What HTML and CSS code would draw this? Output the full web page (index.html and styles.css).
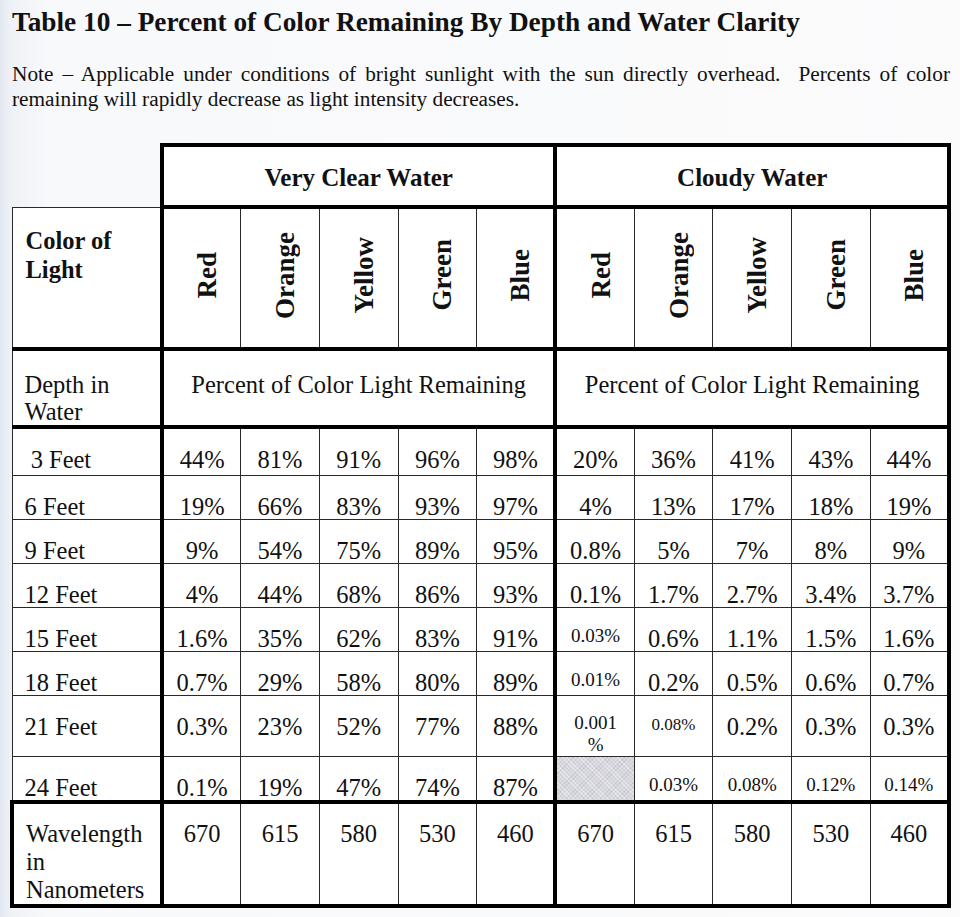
FILE: index.html
```html
<!DOCTYPE html>
<html lang="en">
<head>
<meta charset="utf-8">
<title>Table 10 – Percent of Color Remaining By Depth and Water Clarity</title>
<link rel="stylesheet" href="styles.css">
</head>
<body>
<main class="page">
  <h1 class="title">Table 10 – Percent of Color Remaining By Depth and Water Clarity</h1>
  <p class="note">Note – Applicable under conditions of bright sunlight with the sun directly overhead.&nbsp; Percents of color remaining will rapidly decrease as light intensity decreases.</p>
  <table class="chart">
    <colgroup>
      <col class="c-label">
      <col class="c-val"><col class="c-val"><col class="c-val"><col class="c-val"><col class="c-val">
      <col class="c-val"><col class="c-val"><col class="c-val"><col class="c-val"><col class="c-val">
    </colgroup>
    <tr class="r-group">
      <td class="corner"></td>
      <th colspan="5" class="group">Very Clear Water</th>
      <th colspan="5" class="group">Cloudy Water</th>
    </tr>
    <tr class="r-colors">
      <th class="lbl-color">Color of<br>Light</th>
      <th class="rot g1"><span>Red</span></th>
      <th class="rot"><span>Orange</span></th>
      <th class="rot"><span>Yellow</span></th>
      <th class="rot"><span>Green</span></th>
      <th class="rot"><span>Blue</span></th>
      <th class="rot g1"><span>Red</span></th>
      <th class="rot"><span>Orange</span></th>
      <th class="rot"><span>Yellow</span></th>
      <th class="rot"><span>Green</span></th>
      <th class="rot last"><span>Blue</span></th>
    </tr>
    <tr class="r-depth">
      <td class="lbl">Depth in<br>Water</td>
      <td colspan="5" class="pct g1">Percent of Color Light Remaining</td>
      <td colspan="5" class="pct g1 last">Percent of Color Light Remaining</td>
    </tr>
    <tr class="r-data r-first">
      <td class="lbl">&nbsp;3 Feet</td>
      <td class="g1">44%</td><td>81%</td><td>91%</td><td>96%</td><td>98%</td>
      <td class="g1">20%</td><td>36%</td><td>41%</td><td>43%</td><td class="last">44%</td>
    </tr>
    <tr class="r-data">
      <td class="lbl">6 Feet</td>
      <td class="g1">19%</td><td>66%</td><td>83%</td><td>93%</td><td>97%</td>
      <td class="g1">4%</td><td>13%</td><td>17%</td><td>18%</td><td class="last">19%</td>
    </tr>
    <tr class="r-data">
      <td class="lbl">9 Feet</td>
      <td class="g1">9%</td><td>54%</td><td>75%</td><td>89%</td><td>95%</td>
      <td class="g1">0.8%</td><td>5%</td><td>7%</td><td>8%</td><td class="last">9%</td>
    </tr>
    <tr class="r-data">
      <td class="lbl">12 Feet</td>
      <td class="g1">4%</td><td>44%</td><td>68%</td><td>86%</td><td>93%</td>
      <td class="g1">0.1%</td><td>1.7%</td><td>2.7%</td><td>3.4%</td><td class="last">3.7%</td>
    </tr>
    <tr class="r-data">
      <td class="lbl">15 Feet</td>
      <td class="g1">1.6%</td><td>35%</td><td>62%</td><td>83%</td><td>91%</td>
      <td class="g1 small">0.03%</td><td>0.6%</td><td>1.1%</td><td>1.5%</td><td class="last">1.6%</td>
    </tr>
    <tr class="r-data">
      <td class="lbl">18 Feet</td>
      <td class="g1">0.7%</td><td>29%</td><td>58%</td><td>80%</td><td>89%</td>
      <td class="g1 small">0.01%</td><td>0.2%</td><td>0.5%</td><td>0.6%</td><td class="last">0.7%</td>
    </tr>
    <tr class="r-data r-tall">
      <td class="lbl">21 Feet</td>
      <td class="g1">0.3%</td><td>23%</td><td>52%</td><td>77%</td><td>88%</td>
      <td class="g1 small two">0.001<br>%</td><td class="smaller">0.08%</td><td>0.2%</td><td>0.3%</td><td class="last">0.3%</td>
    </tr>
    <tr class="r-data r-last">
      <td class="lbl">24 Feet</td>
      <td class="g1">0.1%</td><td>19%</td><td>47%</td><td>74%</td><td>87%</td>
      <td class="g1 shade"></td><td class="small">0.03%</td><td class="small">0.08%</td><td class="small">0.12%</td><td class="last small">0.14%</td>
    </tr>
    <tr class="r-wave">
      <td class="lbl">Wavelength<br>in<br>Nanometers</td>
      <td class="g1">670</td><td>615</td><td>580</td><td>530</td><td>460</td>
      <td class="g1">670</td><td>615</td><td>580</td><td>530</td><td class="last">460</td>
    </tr>
  </table>
</main>
</body>
</html>
```

FILE: styles.css
```css
* {
  box-sizing: border-box;
}

html,
body {
  margin: 0;
  padding: 0;
}

body {
  width: 960px;
  height: 917px;
  overflow: hidden;
  background: linear-gradient(90deg, #e3e7f0 0px, #eef1f6 10px, #f8f9fb 50px, #fbfbfc 100%);
  font-family: "Liberation Serif", "Times New Roman", serif;
  color: #111;
}

.page {
  padding: 7px 0 0 12px;
}

.title {
  margin: 0;
  font-size: 27.3px;
  line-height: 30px;
  font-weight: bold;
}

.note {
  width: 938px;
  margin: 25px 0 0;
  font-size: 21.3px;
  line-height: 25px;
  text-align: justify;
}

.chart {
  border-collapse: collapse;
  table-layout: fixed;
  width: 937px;
  margin: 31px 0 0 -2px;
}

.c-label {
  width: 150px;
}

.c-val {
  width: 78.7px;
}

.chart td,
.chart th {
  border: 1px solid #2a2a2a;
  padding: 0;
  background: #fff;
  font-weight: normal;
  font-size: 24.5px;
  text-align: center;
  vertical-align: top;
}

.chart .corner {
  border: none;
  background: transparent;
}

.r-group {
  height: 62px;
}

.chart .group {
  border: 4px solid #000;
  font-weight: bold;
  font-size: 25px;
  vertical-align: middle;
  padding-top: 4px;
}

.r-colors {
  height: 142px;
}

.chart .lbl-color {
  text-align: left;
  font-weight: bold;
  font-size: 24.5px;
  line-height: 29px;
  padding: 18px 0 0 13px;
}

.chart .rot {
  vertical-align: middle;
  padding-left: 10px;
}

.rot span {
  display: inline-block;
  writing-mode: vertical-rl;
  transform: rotate(180deg);
  font-weight: bold;
  font-size: 27px;
  line-height: 28px;
}

.r-colors > * {
  border-bottom: 4px solid #000 !important;
}

.r-depth {
  height: 78px;
}

.r-depth > * {
  border-bottom: 4px solid #000 !important;
  line-height: 27px;
  padding-top: 20px !important;
}

.chart .lbl {
  text-align: left;
  padding-left: 12px;
}

.chart .g1 {
  border-left: 4px solid #000;
}

.chart .last {
  border-right: 4px solid #000;
}

.r-data {
  height: 44px;
}

.r-data > * {
  padding-top: 19px !important;
  line-height: 23px;
}

.r-first {
  height: 48px;
}

.r-tall {
  height: 61px;
}

.r-last {
  height: 46px;
}

.chart .small {
  font-size: 19px;
  line-height: 22px;
  padding-top: 17px !important;
}

.chart .two {
  line-height: 22px;
  padding-top: 16px !important;
}

.chart .smaller {
  font-size: 17px;
  line-height: 22px;
  padding-top: 18px !important;
}

.chart .shade {
  background-color: #d7d7de;
  background-image:
    repeating-linear-gradient(45deg, rgba(255, 255, 255, 0.45) 0 1px, transparent 1px 3px),
    repeating-linear-gradient(-45deg, rgba(160, 160, 175, 0.35) 0 1px, transparent 1px 3px);
}

.r-wave {
  height: 104px;
}

.r-wave > * {
  border-top: 4px solid #000 !important;
  border-bottom: 4px solid #000 !important;
  line-height: 28px;
  padding-top: 16px !important;
}

.r-wave .lbl {
  border-left: 4px solid #000;
}
```
